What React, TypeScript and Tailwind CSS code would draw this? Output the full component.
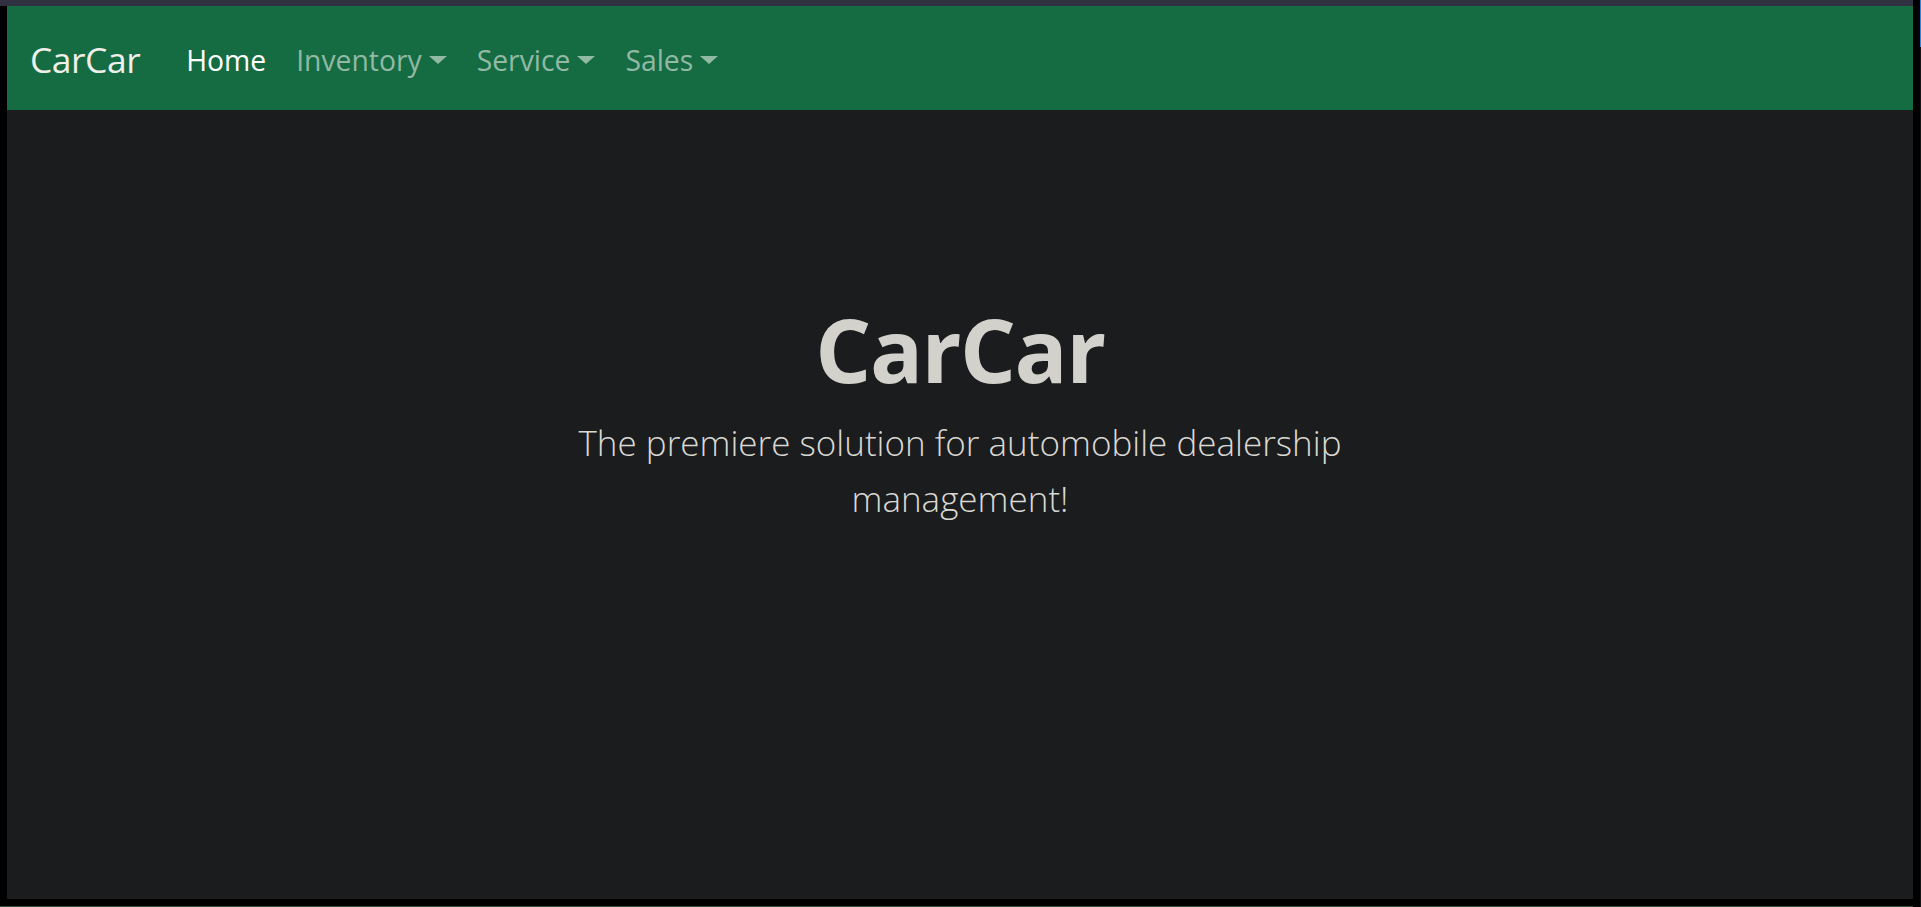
import React from "react";

const Caret = () => (
  <span className="ml-[7px] inline-block w-0 h-0 border-t-[8.5px] border-t-[#92b9a3] border-x-[9px] border-x-transparent align-[0.255em]" />
);

export default function App() {
  const font = { fontFamily: '"Open Sans", "Noto Sans", sans-serif' };
  return (
    <div className="w-[1921px] h-[907px] bg-black flex overflow-hidden" style={font}>
      <div className="w-[1913px] flex flex-col">
        <div className="h-[6px] bg-[#2f3140]" />
        <div className="flex flex-1">
          <div className="w-[7px] bg-black" />
          <div className="flex-1 flex flex-col bg-[#1b1c1e]">
            <nav className="h-[104px] bg-[#156c43] flex items-center pl-[23px]">
              <a className="mt-[2px] text-[35.5px] leading-[52px] text-[#f0efea] mr-[31px] tracking-[-0.5px]">CarCar</a>
              <ul className="flex items-center mt-[4px]">
                <li className="px-[15px] text-[28.3px] leading-[42px] text-white">Home</li>
                <li className="px-[15px] text-[28.3px] leading-[42px] text-[#92b9a3]">
                  Inventory
                  <Caret />
                </li>
                <li className="px-[15px] text-[28.3px] leading-[42px] text-[#92b9a3]">
                  Service
                  <Caret />
                </li>
                <li className="px-[15px] text-[28.3px] leading-[42px] text-[#92b9a3]">
                  Sales
                  <Caret />
                </li>
              </ul>
            </nav>
            <main className="flex-1 flex flex-col items-center pt-[186px] text-center">
              <h1 className="text-[88px] leading-[106px] font-bold text-[#d3d1cb] tracking-[-1.5px]">CarCar</h1>
              <p className="mt-[13px] w-[900px] text-[35px] leading-[56px] font-light text-[#dad8d2]">
                The premiere solution for automobile dealership management!
              </p>
            </main>
          </div>
        </div>
        <div className="h-[8px] flex flex-col">
          <div className="h-[7px] bg-black" />
          <div className="h-[1px] bg-[#34553f]" />
        </div>
      </div>
      <div className="w-[8px] flex">
        <div className="w-[7px] bg-black" />
        <div className="w-[1px] flex flex-col">
          <div className="h-[47px] bg-[#2f86e0]" />
          <div className="flex-1 bg-[#151515]" />
        </div>
      </div>
    </div>
  );
}
